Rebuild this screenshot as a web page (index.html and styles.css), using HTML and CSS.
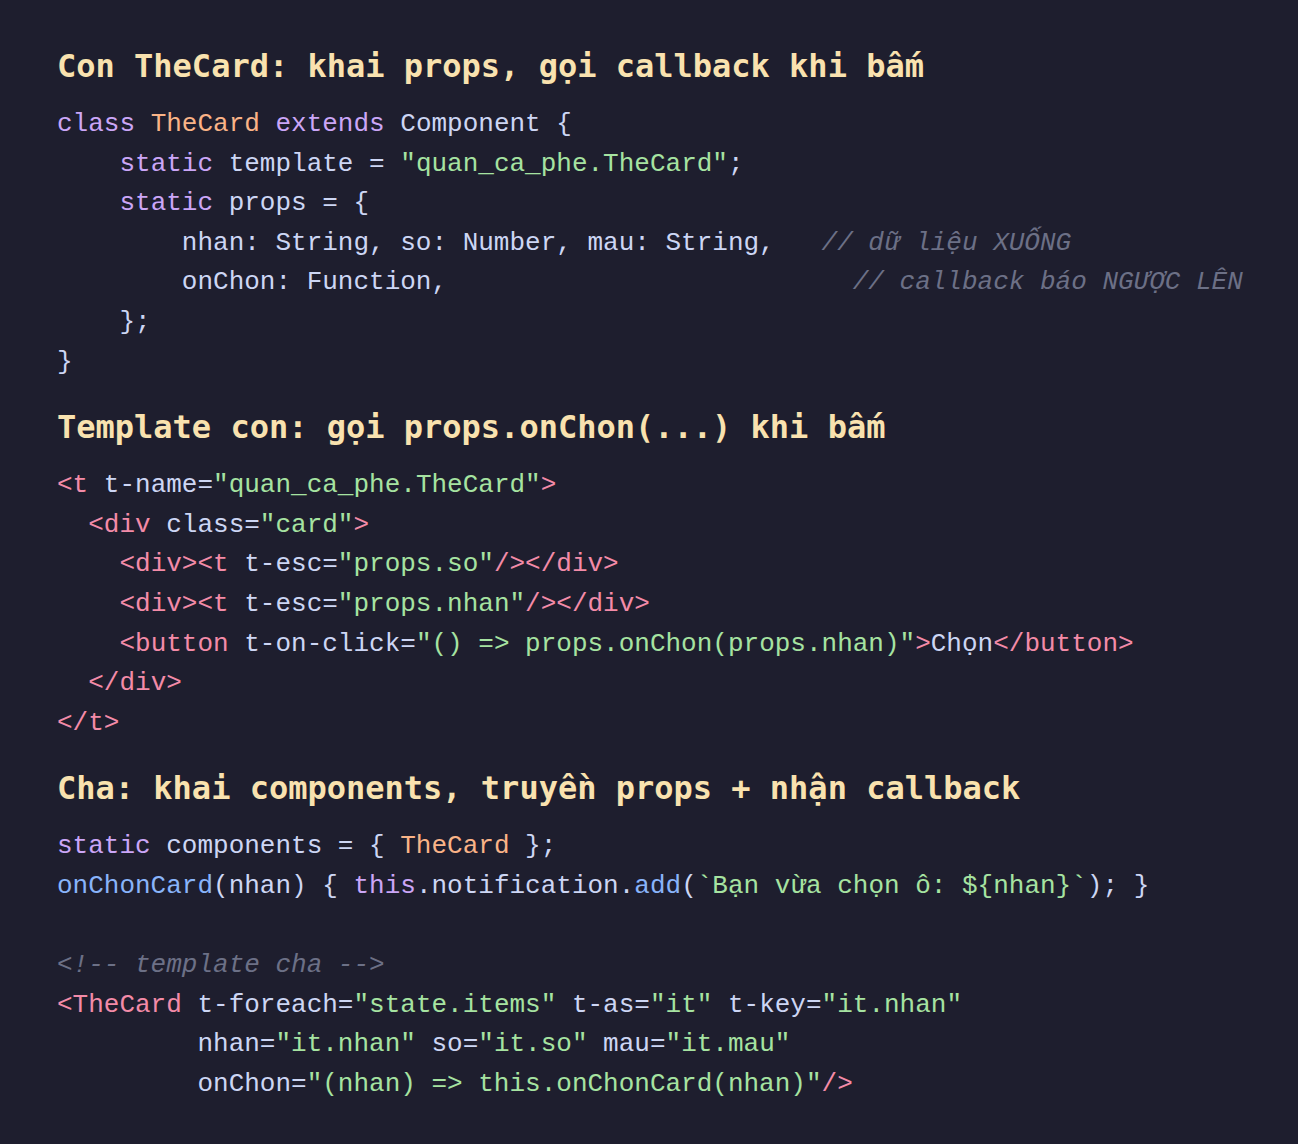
FILE: index.html
```html
<!DOCTYPE html>
<html lang="vi">
<head>
<meta charset="utf-8">
<title>TheCard</title>
<link rel="stylesheet" href="styles.css">
</head>
<body>
<main class="page">
<h2 class="title">Con TheCard: khai props, gọi callback khi bấm</h2>
<pre class="code"><span class="k">class</span> <span class="c">TheCard</span> <span class="k">extends</span> Component {
    <span class="k">static</span> template = <span class="s">"quan_ca_phe.TheCard"</span>;
    <span class="k">static</span> props = {
        nhan: String, so: Number, mau: String,   <span class="cm">// dữ liệu XUỐNG</span>
        onChon: Function,                          <span class="cm">// callback báo NGƯỢC LÊN</span>
    };
}</pre>
<h2 class="title">Template con: gọi props.onChon(...) khi bấm</h2>
<pre class="code"><span class="t">&lt;t</span> t-name=<span class="s">"quan_ca_phe.TheCard"</span><span class="t">&gt;</span>
  <span class="t">&lt;div</span> class=<span class="s">"card"</span><span class="t">&gt;</span>
    <span class="t">&lt;div&gt;&lt;t</span> t-esc=<span class="s">"props.so"</span><span class="t">/&gt;&lt;/div&gt;</span>
    <span class="t">&lt;div&gt;&lt;t</span> t-esc=<span class="s">"props.nhan"</span><span class="t">/&gt;&lt;/div&gt;</span>
    <span class="t">&lt;button</span> t-on-click=<span class="s">"() =&gt; props.onChon(props.nhan)"</span><span class="t">&gt;</span>Chọn<span class="t">&lt;/button&gt;</span>
  <span class="t">&lt;/div&gt;</span>
<span class="t">&lt;/t&gt;</span></pre>
<h2 class="title">Cha: khai components, truyền props + nhận callback</h2>
<pre class="code"><span class="k">static</span> components = { <span class="c">TheCard</span> };
<span class="f">onChonCard</span>(nhan) { <span class="k">this</span>.notification.<span class="f">add</span>(<span class="s">`Bạn vừa chọn ô: ${nhan}`</span>); }

<span class="cm">&lt;!-- template cha --&gt;</span>
<span class="t">&lt;TheCard</span> t-foreach=<span class="s">"state.items"</span> t-as=<span class="s">"it"</span> t-key=<span class="s">"it.nhan"</span>
         nhan=<span class="s">"it.nhan"</span> so=<span class="s">"it.so"</span> mau=<span class="s">"it.mau"</span>
         onChon=<span class="s">"(nhan) =&gt; this.onChonCard(nhan)"</span><span class="t">/&gt;</span></pre>
</main>
</body>
</html>
```
FILE: styles.css
```css
html, body {
  margin: 0;
  padding: 0;
  background: #1e1e2e;
}

.page {
  padding: 46px 0 0 57px;
  color: #cdd6f4;
}

.title {
  margin: 0 0 19px 0;
  font-family: "DejaVu Sans Mono", monospace;
  font-weight: bold;
  font-size: 32px;
  line-height: 40px;
  color: #f9e2af;
}

.code {
  margin: 0 0 25px 0;
  font-family: "Liberation Mono", "Courier New", monospace;
  font-size: 26px;
  line-height: 39.6px;
  color: #cdd6f4;
  white-space: pre;
}

.k { color: #cba6f7; }
.c { color: #fab387; }
.s { color: #a6e3a1; }
.t { color: #f38ba8; }
.f { color: #89b4fa; }
.cm { color: #6c7086; font-style: italic; }
```
